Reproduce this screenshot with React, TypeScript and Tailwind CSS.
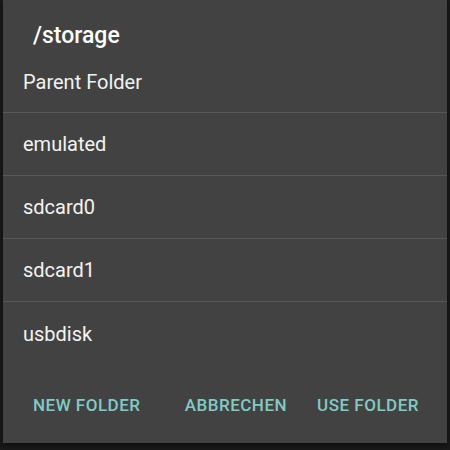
import React from 'react';

const items = ['Parent Folder', 'emulated', 'sdcard0', 'sdcard1', 'usbdisk'];

const App = () => {
  return (
    <div className="w-[450px] h-[450px] bg-[#1a1a1a] overflow-hidden font-['Roboto',sans-serif]">
      <div className="ml-[3px] w-[444px] h-[443px] bg-[#424242] flex flex-col shadow-[0_2px_6px_rgba(0,0,0,0.6)]">
        {/* title */}
        <div className="h-[51px] pl-[30px] pt-[24px]">
          <span className="block text-[23px] font-medium text-white leading-[23px]">/storage</span>
        </div>

        {/* folder list */}
        <div className="flex flex-col">
          {items.map((name, i) => (
            <div
              key={name}
              className={
                i === 0
                  ? 'h-[62px] flex items-center pl-[20px] border-b border-[#575757]'
                  : i < items.length - 1
                  ? 'h-[63px] flex items-center pl-[20px] border-b border-[#575757]'
                  : 'h-[63px] flex items-center pl-[20px]'
              }
            >
              <span className="text-[20px] text-[#f2f2f2] leading-none">{name}</span>
            </div>
          ))}
        </div>

        {/* buttons */}
        <div className="mt-[20px] flex items-center pl-[30px] pr-[28px] h-[40px]">
          <span className="text-[17px] tracking-[0.5px] font-medium text-[#80cbc4] leading-none">NEW FOLDER</span>
          <div className="flex-1" />
          <span className="text-[17px] tracking-[0.5px] font-medium text-[#80cbc4] leading-none">ABBRECHEN</span>
          <span className="ml-[30px] text-[17px] tracking-[0.5px] font-medium text-[#80cbc4] leading-none">USE FOLDER</span>
        </div>
      </div>
    </div>
  );
};

export default App;
